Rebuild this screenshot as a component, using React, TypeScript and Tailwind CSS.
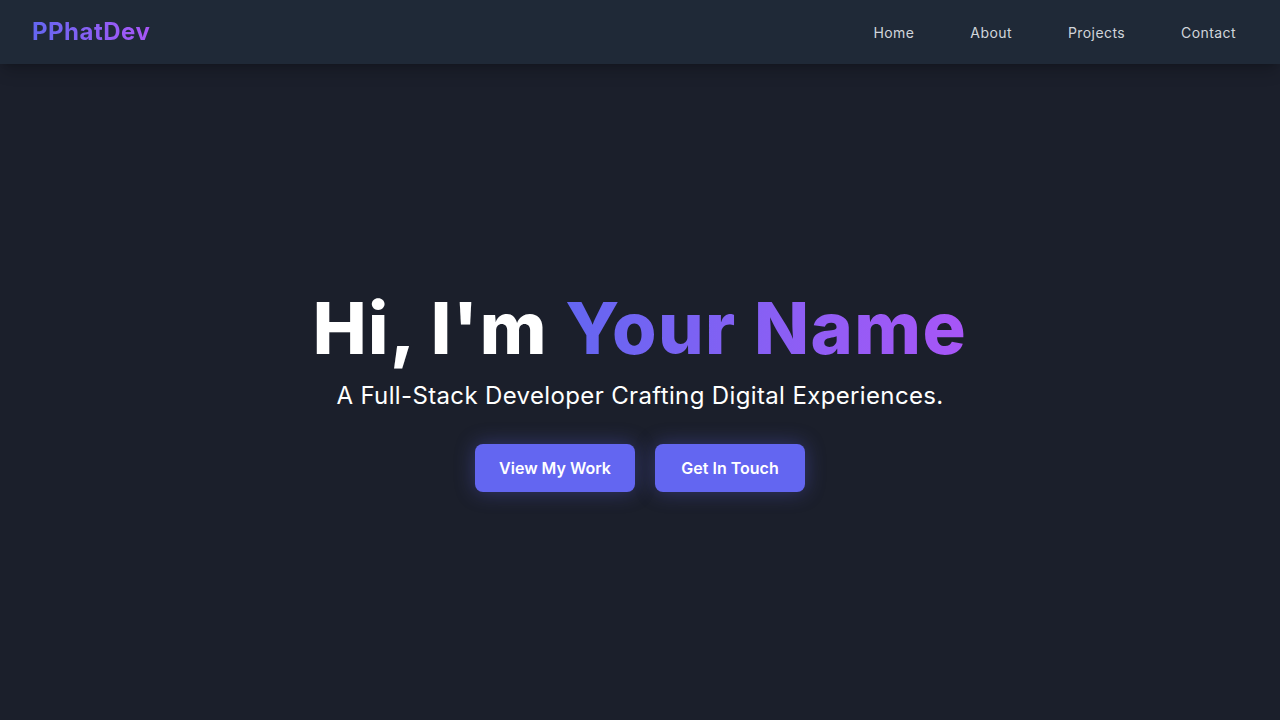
const font = { fontFamily: "Inter, 'Noto Sans', sans-serif" };

function Header() {
  return (
    <header className="flex h-16 items-center justify-between bg-[#1f2937] px-8 shadow-lg shadow-black/20">
      <a
        href="#"
        className="bg-gradient-to-r from-[#6366f1] to-[#a855f7] bg-clip-text text-2xl font-bold tracking-[0.02em] text-transparent"
      >
        PPhatDev
      </a>
      <nav className="flex items-center gap-14 pr-3 text-[14px] tracking-[0.03em] text-[#d1d5db]">
        <a href="#">Home</a>
        <a href="#">About</a>
        <a href="#">Projects</a>
        <a href="#">Contact</a>
      </nav>
    </header>
  );
}

export default function App() {
  return (
    <div className="flex min-h-screen flex-col bg-[#1b1f2b] text-white" style={font}>
      <Header />
      <main className="flex flex-1 flex-col items-center justify-center text-center">
        <h1 className="text-7xl leading-none font-extrabold tracking-[0.02em]">
          Hi, I'm{" "}
          <span className="bg-gradient-to-r from-[#6366f1] to-[#a855f7] bg-clip-text text-transparent">
            Your Name
          </span>
        </h1>
        <p className="mt-4 text-2xl tracking-[0.015em]">
          A Full-Stack Developer Crafting Digital Experiences.
        </p>
        <div className="mt-8 flex gap-5">
          <a
            href="#"
            className="flex h-12 w-40 items-center justify-center rounded-lg bg-[#6366f1] font-semibold shadow-[0_0_20px_rgba(99,102,241,0.35)]"
          >
            View My Work
          </a>
          <a
            href="#"
            className="flex h-12 w-[150px] items-center justify-center rounded-lg bg-[#6366f1] font-semibold shadow-[0_0_20px_rgba(99,102,241,0.35)]"
          >
            Get In Touch
          </a>
        </div>
      </main>
    </div>
  );
}
